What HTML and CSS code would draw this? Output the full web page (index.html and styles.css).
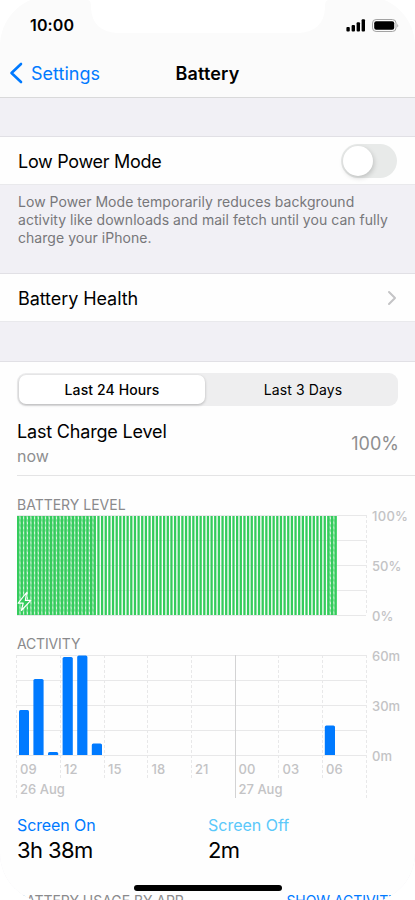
FILE: index.html
```html
<!DOCTYPE html>
<html lang="en">

  <head>
    <meta charset="UTF-8">
    <meta name="viewport" content="width=device-width, initial-scale=1.0">
    <title>Battery</title>

    <link rel="stylesheet" href="styles.css">
  </head>

  <body>

    <div class="phone">

      <header>
        <svg class="notch" width="240" height="34" viewBox="0 0 240 34">
          <path d="M0 0Q3 1 3 6V8Q4 31 29 33H211Q236 31 237 8V6Q237 1 240 0Z" fill="#fff"/>
        </svg>
        <div class="status-bar">
          <span class="time">10:00</span>
          <svg width="54" height="16" viewBox="0 0 54 16">
            <rect x="1.4" y="10" width="3.4" height="4.5" rx="1"/>
            <rect x="6.6" y="8" width="3.4" height="6.5" rx="1"/>
            <rect x="11.6" y="5.2" width="3.4" height="9.3" rx="1"/>
            <rect x="16.6" y="2.3" width="3.4" height="12.2" rx="1"/>
            <rect x="27.5" y="2.5" width="23.5" height="12" rx="3.6" fill="none" stroke="#a3a3a3"/>
            <rect x="29.2" y="4.2" width="20" height="8.6" rx="2"/>
            <path d="M52.3 6.5Q54 8.5 52.3 10.5Z" fill="#a3a3a3"/>
          </svg>
        </div>
        <nav>
          <a class="back">
            <svg width="14" height="22" viewBox="0 0 14 22">
              <path d="M12 2L2.5 11L12 20" fill="none" stroke="#007aff" stroke-width="2.6" stroke-linecap="round" stroke-linejoin="round"/>
            </svg>
            Settings
          </a>
          <h1>Battery</h1>
        </nav>
      </header>

      <main>
        <div class="row power-row">
          <span class="label">Low Power Mode</span>
          <span class="switch"></span>
        </div>
        <p class="note">Low Power Mode temporarily reduces background<br>activity like downloads and mail fetch until you can fully<br>charge your iPhone.</p>

        <div class="row health-row">
          <span class="label">Battery Health</span>
          <svg width="10" height="16" viewBox="0 0 10 16">
            <path d="M2 2L8 8L2 14" fill="none" stroke="#c4c4c6" stroke-width="2" stroke-linecap="round" stroke-linejoin="round"/>
          </svg>
        </div>

        <section class="usage">
          <div class="tabs">
            <span class="tab active">Last 24 Hours</span>
            <span class="tab">Last 3 Days</span>
          </div>

          <div class="charge">
            <div>
              <h2>Last Charge Level</h2>
              <p>now</p>
            </div>
            <span class="percent">100%</span>
          </div>

          <h3>BATTERY LEVEL</h3>
          <svg class="chart" id="level" width="398" height="104" viewBox="0 0 398 104">
            <defs>
              <pattern id="hatch" width="3.65" height="5" patternUnits="userSpaceOnUse">
                <rect width="3.65" height="5" fill="#86e09d"/>
                <path d="M2.2 0.8L3.65 2.6V4.8L2.2 3Z" fill="#f1fcf4"/>
              </pattern>
            </defs>
            <path class="grid" d="M0 0.5H349M0 25.5H349M0 50.5H349M0 75.5H349M0 100.5H349"/>
            <path class="dash" d="M349.5 0V100"/>
            <rect x="0" y="1" width="78" height="99" fill="url(#hatch)"/>
            <rect x="310" y="1" width="9" height="99" fill="url(#hatch)"/>
            <g id="level-bars" fill="#34cc5c"></g>
            <path d="M9.6 77.5L1.2 88.2H6.2L4.4 95.5L13.8 85.4H8.4L9.6 77.5Z" fill="#34cc5c" stroke="#fff" stroke-width="1.2" stroke-linejoin="round"/>
            <g class="axis">
              <text x="355" y="5.5" textLength="36">100%</text>
              <text x="355" y="55.5">50%</text>
              <text x="355" y="105.5">0%</text>
            </g>
          </svg>

          <h3 class="activity-title">ACTIVITY</h3>
          <svg class="chart" width="398" height="144" viewBox="0 0 398 144">
            <path class="grid" d="M0 0.5H349M0 25.5H349M0 50.5H349M0 75.5H349M0 100.5H349"/>
            <path class="dash" d="M-0.5 0V144M43.5 0V125M87.5 0V125M130.5 0V125M174.5 0V125M261.5 0V125M305.5 0V125M349.5 0V144"/>
            <path d="M218.5 0V143" stroke="#d3d3d4"/>
            <g fill="#007aff">
              <path d="M2 100V56.5Q2 55 3.5 55H10.5Q12 55 12 56.5V100Z"/>
              <path d="M16.4 100V25.5Q16.4 24 18 24H25Q26.6 24 26.6 25.5V100Z"/>
              <path d="M31 100V98.5Q31 97 32.6 97H39.6Q41.2 97 41.2 98.5V100Z"/>
              <path d="M45.6 100V3.5Q45.6 2 47.2 2H54.2Q55.8 2 55.8 3.5V100Z"/>
              <path d="M60.2 100V2Q60.2 0.5 61.8 0.5H68.8Q70.4 0.5 70.4 2V100Z"/>
              <path d="M74.8 100V90Q74.8 88.4 76.4 88.4H83.4Q85 88.4 85 90V100Z"/>
              <path d="M307.8 100V72Q307.8 70.4 309.4 70.4H316.4Q318 70.4 318 72V100Z"/>
            </g>
            <g class="axis">
              <text x="355" y="5.5">60m</text>
              <text x="355" y="55.5">30m</text>
              <text x="355" y="105.5">0m</text>
              <text x="3" y="118.5">09</text>
              <text x="47" y="118.5">12</text>
              <text x="91" y="118.5">15</text>
              <text x="134.5" y="118.5">18</text>
              <text x="178" y="118.5">21</text>
              <text x="221.5" y="118.5">00</text>
              <text x="265.5" y="118.5">03</text>
              <text x="309" y="118.5">06</text>
              <text x="3" y="138.5">26 Aug</text>
              <text x="221.5" y="138.5">27 Aug</text>
            </g>
          </svg>

          <div class="screen-time">
            <div>
              <p class="screen-on">Screen On</p>
              <p class="duration">3h 38m</p>
            </div>
            <div>
              <p class="screen-off">Screen Off</p>
              <p class="duration">2m</p>
            </div>
          </div>

          <div class="by-app">
            <span>BATTERY USAGE BY APP</span>
            <a>SHOW ACTIVITY</a>
          </div>
        </section>
      </main>

      <div class="home-indicator"></div>
    </div>

    <script>

      // one bar per 15 minutes, 22 hours so far
      const bars = document.getElementById("level-bars");

      for (let i = 0; i < 88; i++) {
        const bar = document.createElementNS("http://www.w3.org/2000/svg", "rect");
        bar.setAttribute("x", (i * 3.65).toFixed(2));
        bar.setAttribute("y", 1);
        bar.setAttribute("width", 2.3);
        bar.setAttribute("height", 99);
        bars.appendChild(bar);
      }

    </script>
  </body>

</html>
```

FILE: styles.css
```css
* {
  margin: 0;
  padding: 0;
  box-sizing: border-box;
}

body {
  height: 900px;
  overflow: hidden;
  background: #fff;
  font-family: Inter, "Liberation Sans", sans-serif;
  color: #000;
}

.phone {
  position: relative;
  width: 415px;
  height: 907px;
  margin-top: -4px;
  padding-top: 4px;
  border-radius: 50px;
  overflow: hidden;
  background: #fbfbfb;
}

header {
  position: relative;
  height: 98px;
  border-bottom: 1px solid #d9d9da;
}

.notch {
  position: absolute;
  top: 0;
  left: 88px;
}

.status-bar {
  position: relative;
  display: flex;
  justify-content: space-between;
  align-items: center;
  height: 50px;
  padding: 0 16px 0 30px;
}

.time {
  font-size: 16px;
  font-weight: 600;
  letter-spacing: 0.15px;
}

nav {
  display: grid;
  grid-template-columns: 1fr auto 1fr;
  align-items: center;
  height: 46px;
  padding: 0 9px;
}

.back {
  display: flex;
  align-items: center;
  gap: 8px;
  font-size: 18px;
  color: #007aff;
}

h1 {
  font-size: 18px;
  font-weight: 600;
  letter-spacing: 0.15px;
}

main {
  padding-top: 38px;
  background: #f1f0f5;
}

.row {
  display: flex;
  justify-content: space-between;
  align-items: center;
  height: 49px;
  padding: 0 18px;
  border-top: 1px solid #e1e0e5;
  border-bottom: 1px solid #e9e9ec;
  background: #fefefe;
  font-size: 18px;
}

.label {
  padding-top: 2px;
}

.power-row .label {
  letter-spacing: -0.3px;
}

.health-row .label {
  letter-spacing: -0.07px;
}

.switch {
  width: 56px;
  height: 34px;
  padding: 2px;
  border-radius: 17px;
  background: #e8eae9;
}

.switch::before {
  content: "";
  display: block;
  width: 30px;
  height: 30px;
  border-radius: 50%;
  background: #fff;
  box-shadow: 1px 2px 5px rgba(0, 0, 0, 0.18);
}

.note {
  height: 88px;
  padding: 8px 18px;
  font-size: 14px;
  line-height: 18px;
  letter-spacing: 0.04px;
  white-space: nowrap;
  color: #77777a;
}

.usage {
  height: 543px;
  margin-top: 39px;
  padding: 11px 17px 0;
  border-top: 1px solid #e1e0e5;
  background: #fefefe;
}

.tabs {
  display: flex;
  height: 33px;
  padding: 2px;
  border-radius: 9px;
  background: #eeeeef;
}

.tab {
  flex: 1;
  padding-left: 5px;
  font-size: 14px;
  line-height: 30px;
  letter-spacing: 0.1px;
  text-align: center;
}

.active {
  flex: 0 0 186px;
  padding-left: 0;
  border-radius: 7px;
  background: #fff;
  font-weight: 500;
  box-shadow: 0 1px 3px rgba(0, 0, 0, 0.25);
}

.charge {
  display: flex;
  justify-content: space-between;
  align-items: center;
  height: 70px;
  padding-top: 7px;
  margin-right: -17px;
  padding-right: 16px;
  border-bottom: 1px solid #e4e4e5;

  & h2 {
    font-size: 18px;
    font-weight: 400;
    line-height: 24px;
    letter-spacing: -0.18px;
  }

  & p {
    font-size: 16px;
    line-height: 24px;
    color: #8e8e90;
  }
}

.percent {
  margin-top: -2px;
  font-size: 18px;
  color: #8e8e90;
}

h3 {
  height: 39px;
  padding-top: 20px;
  font-size: 14px;
  font-weight: 400;
  line-height: 18px;
  color: #8a8a8c;
}

.activity-title {
  height: 36px;
  padding-top: 16px;
  letter-spacing: -0.15px;
}

.chart {
  display: block;
  overflow: visible;
}

.grid {
  stroke: #e8e8e9;
}

.dash {
  stroke: #e8e8e9;
  stroke-dasharray: 3 2;
}

.axis {
  font-size: 13px;
  font-weight: 500;
  fill: #c3c3c5;
}

.screen-time {
  display: grid;
  grid-template-columns: 191px 1fr;
  height: 92px;
  padding-top: 16px;
  font-size: 16px;
  line-height: 20px;
}

.screen-on {
  color: #007aff;
  letter-spacing: -0.1px;
}

.screen-off {
  color: #5ac8fa;
}

.duration {
  margin-top: 1px;
  font-size: 22px;
  line-height: 28px;
  letter-spacing: -0.6px;
}

.by-app {
  display: flex;
  justify-content: space-between;
  font-size: 14px;
  line-height: 20px;
  letter-spacing: -0.05px;
  white-space: nowrap;
  color: #8a8a8c;

  & a {
    color: #007aff;
  }
}

.home-indicator {
  position: absolute;
  bottom: 12px;
  left: 134px;
  width: 148px;
  height: 6px;
  border-radius: 3px;
  background: #000;
}
```
